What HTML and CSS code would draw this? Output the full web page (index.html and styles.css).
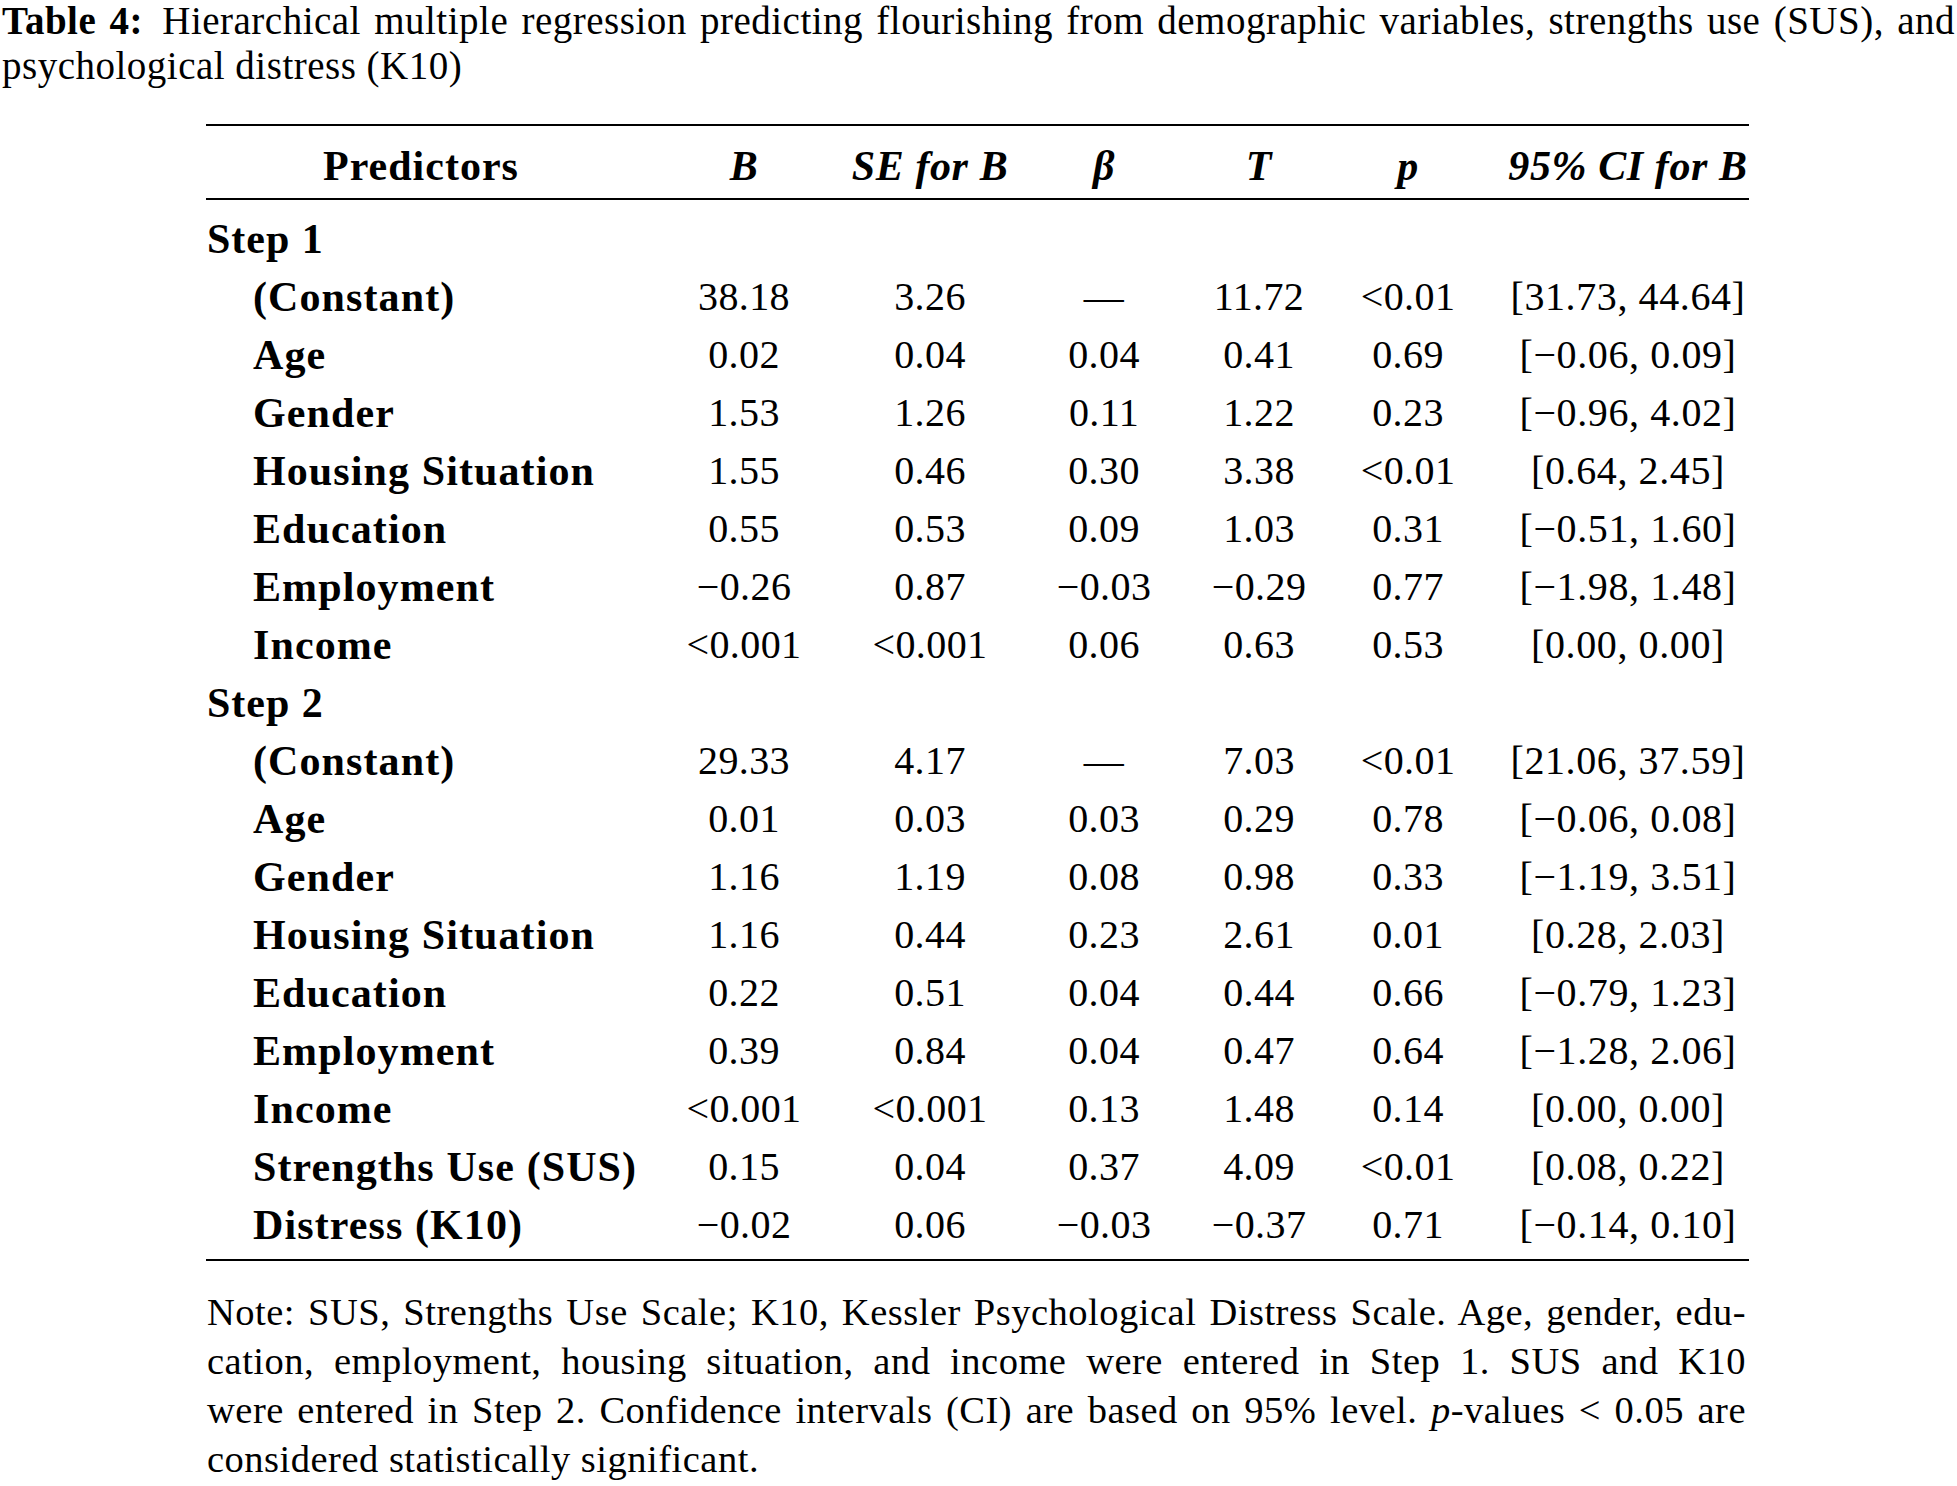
FILE: index.html
```html
<!DOCTYPE html>
<html lang="en">
<head>
<meta charset="utf-8">
<title>Table 4</title>
<link rel="stylesheet" href="styles.css">
</head>
<body>
<div class="caption"><span class="caption-first"><b class="caption-label">Table 4:</b> Hierarchical multiple regression predicting flourishing from demographic variables, strengths use (SUS), and</span><span class="caption-rest">psychological distress (K10)</span></div>

<div class="wrap">
<table class="reg">
  <colgroup>
    <col class="c-pred"><col class="c-b"><col class="c-se"><col class="c-beta"><col class="c-t"><col class="c-p"><col class="c-ci">
  </colgroup>
  <thead>
    <tr>
      <th class="h-pred">Predictors</th>
      <th class="h-it">B</th>
      <th class="h-it">SE for B</th>
      <th class="h-it">β</th>
      <th class="h-it">T</th>
      <th class="h-it">p</th>
      <th class="h-it h-ci">95% CI for B</th>
    </tr>
  </thead>
  <tbody>
    <tr class="step first"><td colspan="7">Step 1</td></tr>
    <tr><td class="lab">(Constant)</td><td>38.18</td><td>3.26</td><td>—</td><td>11.72</td><td>&lt;0.01</td><td class="ci">[31.73, 44.64]</td></tr>
    <tr><td class="lab">Age</td><td>0.02</td><td>0.04</td><td>0.04</td><td>0.41</td><td>0.69</td><td class="ci">[−0.06, 0.09]</td></tr>
    <tr><td class="lab">Gender</td><td>1.53</td><td>1.26</td><td>0.11</td><td>1.22</td><td>0.23</td><td class="ci">[−0.96, 4.02]</td></tr>
    <tr><td class="lab">Housing Situation</td><td>1.55</td><td>0.46</td><td>0.30</td><td>3.38</td><td>&lt;0.01</td><td class="ci">[0.64, 2.45]</td></tr>
    <tr><td class="lab">Education</td><td>0.55</td><td>0.53</td><td>0.09</td><td>1.03</td><td>0.31</td><td class="ci">[−0.51, 1.60]</td></tr>
    <tr><td class="lab">Employment</td><td>−0.26</td><td>0.87</td><td>−0.03</td><td>−0.29</td><td>0.77</td><td class="ci">[−1.98, 1.48]</td></tr>
    <tr><td class="lab">Income</td><td>&lt;0.001</td><td>&lt;0.001</td><td>0.06</td><td>0.63</td><td>0.53</td><td class="ci">[0.00, 0.00]</td></tr>
    <tr class="step"><td colspan="7">Step 2</td></tr>
    <tr><td class="lab">(Constant)</td><td>29.33</td><td>4.17</td><td>—</td><td>7.03</td><td>&lt;0.01</td><td class="ci">[21.06, 37.59]</td></tr>
    <tr><td class="lab">Age</td><td>0.01</td><td>0.03</td><td>0.03</td><td>0.29</td><td>0.78</td><td class="ci">[−0.06, 0.08]</td></tr>
    <tr><td class="lab">Gender</td><td>1.16</td><td>1.19</td><td>0.08</td><td>0.98</td><td>0.33</td><td class="ci">[−1.19, 3.51]</td></tr>
    <tr><td class="lab">Housing Situation</td><td>1.16</td><td>0.44</td><td>0.23</td><td>2.61</td><td>0.01</td><td class="ci">[0.28, 2.03]</td></tr>
    <tr><td class="lab">Education</td><td>0.22</td><td>0.51</td><td>0.04</td><td>0.44</td><td>0.66</td><td class="ci">[−0.79, 1.23]</td></tr>
    <tr><td class="lab">Employment</td><td>0.39</td><td>0.84</td><td>0.04</td><td>0.47</td><td>0.64</td><td class="ci">[−1.28, 2.06]</td></tr>
    <tr><td class="lab">Income</td><td>&lt;0.001</td><td>&lt;0.001</td><td>0.13</td><td>1.48</td><td>0.14</td><td class="ci">[0.00, 0.00]</td></tr>
    <tr><td class="lab">Strengths Use (SUS)</td><td>0.15</td><td>0.04</td><td>0.37</td><td>4.09</td><td>&lt;0.01</td><td class="ci">[0.08, 0.22]</td></tr>
    <tr class="last"><td class="lab">Distress (K10)</td><td>−0.02</td><td>0.06</td><td>−0.03</td><td>−0.37</td><td>0.71</td><td class="ci">[−0.14, 0.10]</td></tr>
  </tbody>
</table>

<p class="note"><span class="note-lines">Note: SUS, Strengths Use Scale; K10, Kessler Psychological Distress Scale. Age, gender, edu-<br>cation, employment, housing situation, and income were entered in Step 1. SUS and K10<br>were entered in Step 2. Confidence intervals (CI) are based on 95% level. <i>p</i>-values &lt; 0.05 are</span>considered statistically significant.</p>
</div>
</body>
</html>
```

FILE: styles.css
```css
html, body {
  margin: 0;
  padding: 0;
  background: #ffffff;
}

body {
  color: #000000;
  font-family: "Liberation Serif", "Times New Roman", serif;
  width: 1957px;
  overflow: hidden;
}

.caption {
  padding: 0 2px 0 2px;
  font-size: 39px;
  letter-spacing: 0.5px;
}

.caption-first {
  display: block;
  line-height: 42px;
  text-align: justify;
  text-align-last: justify;
}

.caption-rest {
  display: block;
  line-height: 48px;
}

.caption-label {
  font-weight: bold;
  margin-right: 6px;
}

.wrap {
  margin: 34px 0 0 206px;
  width: 1543px;
}

.reg {
  border-collapse: collapse;
  border-spacing: 0;
  table-layout: fixed;
  width: 1543px;
}

.c-pred { width: 445px; }
.c-b { width: 186px; }
.c-se { width: 186px; }
.c-beta { width: 162px; }
.c-t { width: 148px; }
.c-p { width: 150px; }
.c-ci { width: 266px; }

.reg thead tr {
  border-top: 2px solid #000;
  border-bottom: 2px solid #000;
}

.reg th {
  padding: 11px 0 3px 0;
  font-size: 42px;
  line-height: 58px;
  font-weight: bold;
  letter-spacing: 0.6px;
  text-align: center;
  vertical-align: top;
  white-space: nowrap;
}

.reg th.h-pred {
  padding-right: 15px;
  letter-spacing: 1px;
}

.reg th.h-it {
  font-style: italic;
}

.reg th.h-ci {
  padding-left: 24px;
}

.reg td {
  padding: 0;
  font-size: 40px;
  line-height: 58px;
  letter-spacing: 0.4px;
  text-align: center;
  vertical-align: top;
  white-space: nowrap;
}

.reg td.ci {
  padding-left: 24px;
  letter-spacing: 0.6px;
}

.reg td.lab {
  text-align: left;
  padding-left: 47px;
  font-size: 42px;
  font-weight: bold;
  letter-spacing: 1.1px;
}

.reg tr.step td {
  text-align: left;
  padding-left: 1px;
  font-size: 42px;
  font-weight: bold;
  letter-spacing: 1px;
}

.reg tr.first td {
  padding-top: 10px;
}

.reg tr.last td {
  padding-bottom: 5px;
}

.reg tr.last {
  border-bottom: 2px solid #000;
}

.note {
  margin: 27px 0 0 0;
  padding: 0 3px 0 1px;
  font-size: 38.5px;
  line-height: 49px;
  letter-spacing: 0.5px;
}

.note-lines {
  display: block;
  text-align: justify;
  text-align-last: justify;
}
```
